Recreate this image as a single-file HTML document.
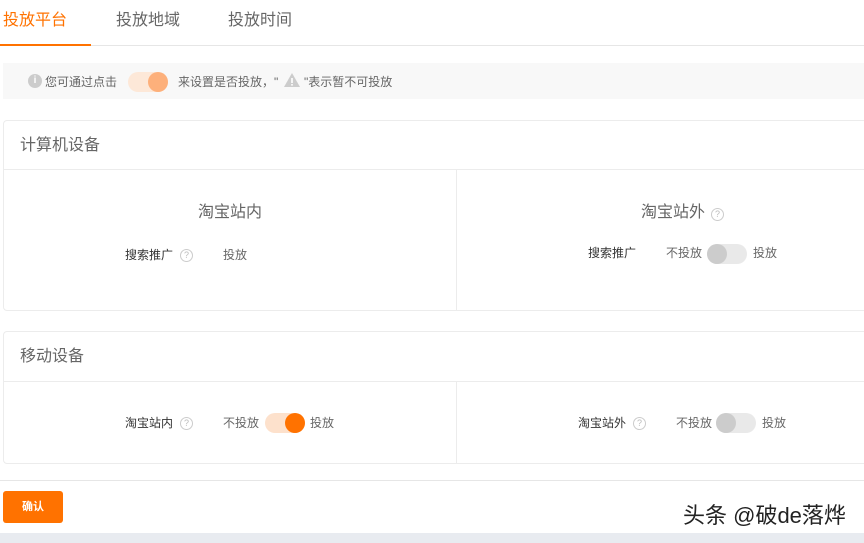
<!DOCTYPE html>
<html><head><meta charset="utf-8"><style>
*{margin:0;padding:0;box-sizing:border-box}
body{width:864px;height:543px;background:#fff;position:relative;overflow:hidden;font-family:"Liberation Sans","Noto Sans CJK SC",sans-serif;color:#666}
.a{position:absolute;white-space:nowrap}
.tab{font-size:16px;top:11px;line-height:20px}
.sm{font-size:12px;line-height:16px}
.tg{position:absolute;width:40px;height:20px;border-radius:10px}
.tg i{position:absolute;top:0;width:20px;height:20px;border-radius:50%}
.q{position:absolute;width:13px;height:13px;border:1px solid #ccc;border-radius:50%;font-size:9px;line-height:11px;text-align:center;color:#bbb}
</style></head><body>
<div class="a tab" style="left:3px;color:#ff7200">投放平台</div>
<div class="a tab" style="left:116px;color:#666">投放地域</div>
<div class="a tab" style="left:228px;color:#666">投放时间</div>
<div class="a" style="left:0;top:45px;width:864px;height:1px;background:#e6e6e6"></div>
<div class="a" style="left:0;top:44px;width:91px;height:2px;background:#ff7200"></div>

<div class="a" style="left:3px;top:63px;width:861px;height:36px;background:#f8f8f8"></div>
<div class="a" style="left:28px;top:74px;width:14px;height:14px;border-radius:50%;background:#ccc;color:#fff;font-size:10px;line-height:14px;text-align:center;font-weight:bold">i</div>
<div class="a sm" style="left:45px;top:74px;color:#666">您可通过点击</div>
<div class="tg" style="left:128px;top:72px;background:#fde8d8"><i style="right:0;background:#fdb07b"></i></div>
<div class="a sm" style="left:178px;top:74px;color:#666">来设置是否投放，"</div>
<svg class="a" style="left:283px;top:72px" width="18" height="16"><path d="M9 1L17 15H1Z" fill="#ccc"/><rect x="8.2" y="6" width="1.6" height="5" fill="#fff"/><rect x="8.2" y="12" width="1.6" height="1.6" fill="#fff"/></svg>
<div class="a sm" style="left:304px;top:74px;color:#666">"表示暂不可投放</div>

<div class="a" style="left:3px;top:120px;width:870px;height:191px;border:1px solid #ececec;border-radius:4px"></div>
<div class="a" style="left:20px;top:136px;font-size:16px;line-height:20px;color:#666">计算机设备</div>
<div class="a" style="left:4px;top:169px;width:860px;height:1px;background:#ececec"></div>
<div class="a" style="left:456px;top:170px;width:1px;height:140px;background:#ececec"></div>
<div class="a" style="left:198px;top:203px;font-size:16px;line-height:20px;color:#666">淘宝站内</div>
<div class="a sm" style="left:125px;top:247px;color:#333">搜索推广</div>
<div class="q" style="left:180px;top:249px">?</div>
<div class="a sm" style="left:223px;top:247px;color:#666">投放</div>
<div class="a" style="left:641px;top:203px;font-size:16px;line-height:20px;color:#666">淘宝站外</div>
<div class="q" style="left:711px;top:208px">?</div>
<div class="a sm" style="left:588px;top:245px;color:#333">搜索推广</div>
<div class="a sm" style="left:666px;top:245px;color:#666">不投放</div>
<div class="tg" style="left:707px;top:244px;background:#e9e9e9"><i style="left:0;background:#ccc"></i></div>
<div class="a sm" style="left:753px;top:245px;color:#666">投放</div>

<div class="a" style="left:3px;top:331px;width:870px;height:133px;border:1px solid #ececec;border-radius:4px"></div>
<div class="a" style="left:20px;top:347px;font-size:16px;line-height:20px;color:#666">移动设备</div>
<div class="a" style="left:4px;top:381px;width:860px;height:1px;background:#ececec"></div>
<div class="a" style="left:456px;top:382px;width:1px;height:81px;background:#ececec"></div>
<div class="a sm" style="left:125px;top:415px;color:#333">淘宝站内</div>
<div class="q" style="left:180px;top:417px">?</div>
<div class="a sm" style="left:223px;top:415px;color:#666">不投放</div>
<div class="tg" style="left:265px;top:413px;background:#fde1cc"><i style="right:0;background:#ff7200"></i></div>
<div class="a sm" style="left:310px;top:415px;color:#666">投放</div>
<div class="a sm" style="left:578px;top:415px;color:#333">淘宝站外</div>
<div class="q" style="left:633px;top:417px">?</div>
<div class="a sm" style="left:676px;top:415px;color:#666">不投放</div>
<div class="tg" style="left:716px;top:413px;background:#e9e9e9"><i style="left:0;background:#ccc"></i></div>
<div class="a sm" style="left:762px;top:415px;color:#666">投放</div>

<div class="a" style="left:0;top:480px;width:864px;height:1px;background:#e6e6e6"></div>
<div class="a" style="left:3px;top:491px;width:60px;height:32px;background:#ff7200;border-radius:3px;color:#fff;font-size:11px;line-height:32px;text-align:center;font-weight:bold">确认</div>
<div class="a" style="left:683px;top:502px;font-size:22px;line-height:28px;color:#222;text-shadow:0 0 2px #fff">头条 @破de落烨</div>
<div class="a" style="left:0;top:533px;width:864px;height:10px;background:#e8ebf0"></div>
</body></html>
